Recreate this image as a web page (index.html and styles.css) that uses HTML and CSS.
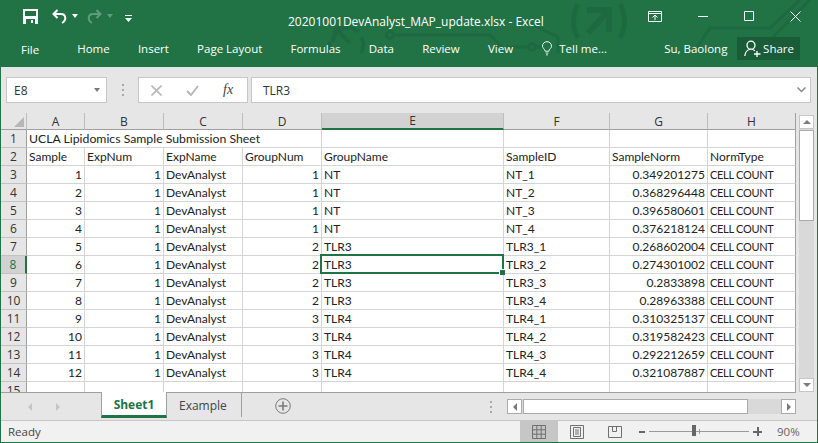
FILE: index.html
```html
<!DOCTYPE html>
<html lang="en">
<head>
    <meta charset="UTF-8">
    <title>20201001DevAnalyst_MAP_update.xlsx - Excel</title>
    <link rel="stylesheet" href="styles.css">
</head>
<body>
<div class="window">

    <!-- Green title area -->
    <header class="top">
        <svg class="circuit" width="816" height="67" viewBox="0 0 816 67" fill="none" stroke="#1e6a40" stroke-width="3">
            <path d="M332 42a14.500 14.500 0 0 1 25-10M334 28h8M334 28v8M334 28l15 15" stroke-width="4"/>
            <path d="M330 53a16 16 0 0 1-1-11M360 53a16 16 0 0 0 0-16" stroke-width="4"/>
            <circle cx="389" cy="35" r="3.500"/>
            <path d="M393 35h96l18 18"/>
            <circle cx="531" cy="47" r="3.500"/>
            <path d="M505 47h22M535 47h6M526 22l31 15v16"/>
            <path d="M577 4q-9 17 0 34M619 4q9 17 0 34" stroke-width="5"/>
            <path d="M586 10h22v22M607 11l-20 22" stroke-width="6"/>
            <path d="M692 53l17-25h60l30-28M769 40l40-40"/>
        </svg>

        <div class="titlebar">
            <div class="qat">
                <svg width="15" height="15" viewBox="0 0 15 15" class="qat-save">
                    <path d="M0 0h15v15H0z" fill="#fff"/>
                    <path d="M2 2h11v5H2zM3 10h9v5H3z" fill="#217346"/>
                    <path d="M8 11h2v3H8z" fill="#fff"/>
                </svg>
                <svg width="15" height="15" viewBox="0 0 15 15" class="qat-undo" fill="none" stroke="#fff" stroke-width="2">
                    <path d="M5.500 1L1.500 5l4 4M1.500 5H9c5 0 6 6 1 9"/>
                </svg>
                <span class="caret"></span>
                <svg width="15" height="15" viewBox="0 0 15 15" class="qat-redo" fill="none" stroke="#5f9c7c" stroke-width="2">
                    <path d="M9.500 1l4 4-4 4M13.500 5H6c-5 0-6 6-1 9"/>
                </svg>
                <span class="caret dim"></span>
                <svg width="7" height="8" viewBox="0 0 7 8" class="qat-more">
                    <path d="M0 0h7v1H0zM0 3h7L3.500 7z" fill="#fff"/>
                </svg>
            </div>
            <div class="doc-title">20201001DevAnalyst_MAP_update.xlsx - Excel</div>
            <div class="win-btns">
                <svg width="14" height="11" viewBox="0 0 14 11" fill="none" stroke="#fff">
                    <path d="M.500.500h13v10H.500zM.500 2.500h13M7 9V4.500M4.500 6.500L7 4l2.500 2.500"/>
                </svg>
                <svg width="10" height="11" viewBox="0 0 10 11" stroke="#fff"><path d="M0 5.500h10"/></svg>
                <svg width="10" height="10" viewBox="0 0 10 10" fill="none" stroke="#fff"><path d="M.500.500h9v9h-9z"/></svg>
                <svg width="11" height="11" viewBox="0 0 11 11" stroke="#fff"><path d="M.500.500l10 10M10.500.500l-10 10"/></svg>
            </div>
        </div>

        <nav class="ribbon">
            <span class="tab-file">File</span>
            <span>Home</span>
            <span>Insert</span>
            <span>Page Layout</span>
            <span>Formulas</span>
            <span>Data</span>
            <span>Review</span>
            <span>View</span>
            <span class="tell">
                <svg width="10" height="15" viewBox="0 0 11 15" fill="none" stroke="#fff">
                    <path d="M3.500 10.500C3 8 .500 7 .500 5a5 5 0 0 1 10 0c0 2-2.500 3-3 5.500zM4 12.500h3M4.500 14.500h2"/>
                </svg>
                Tell me...
            </span>
            <span class="user">Su, Baolong</span>
            <span class="share">
                <svg width="17" height="17" viewBox="0 0 17 17" fill="none" stroke="#fff" stroke-width="1.300">
                    <path d="M7 1.200a4 4 0 0 1 0 8 4 4 0 0 1 0-8zM.800 16c.4-4 3-6.800 6.200-6.800 1.500 0 2.800.5 3.800 1.500"/>
                    <path d="M13 11v6M10 14h6.500"/>
                </svg>
                Share
            </span>
        </nav>
    </header>

    <!-- Name box and formula bar -->
    <div class="formula-band">
        <div class="name-box">E8<span class="down"></span></div>
        <div class="dots"><i></i><i></i><i></i></div>
        <div class="fx-group">
            <svg width="11" height="11" viewBox="0 0 11 11" stroke="#b8b8b8" stroke-width="1.600"><path d="M.500.500l10 10M10.500.500l-10 10"/></svg>
            <svg width="13" height="11" viewBox="0 0 13 11" fill="none" stroke="#b8b8b8" stroke-width="2"><path d="M1 6l4 4 7-9"/></svg>
            <span class="fx">fx</span>
        </div>
        <div class="formula-input">
            TLR3
            <svg width="9" height="6" viewBox="0 0 9 6" fill="none" stroke="#8a8a8a" stroke-width="1.500"><path d="M.500.500l4 4 4-4"/></svg>
        </div>
    </div>

    <!-- Worksheet -->
    <div class="sheet-area">
        <div class="grid-wrap">
            <table class="grid">
                <colgroup>
                    <col class="w-row"><col class="w-a"><col class="w-b"><col class="w-b"><col class="w-b">
                    <col class="w-e"><col class="w-f"><col class="w-g"><col class="w-h">
                </colgroup>
                <thead>
                    <tr>
                        <th class="corner"><svg width="10" height="10" viewBox="0 0 10 10"><path d="M10 0v10H0z" fill="#b6b6b6"/></svg></th>
                        <th>A</th><th>B</th><th>C</th><th>D</th><th class="on">E</th><th>F</th><th>G</th><th class="last">H</th>
                    </tr>
                </thead>
                <tbody>
                    <tr><th>1</th><td colspan="4" class="heading">UCLA Lipidomics Sample Submission Sheet</td><td></td><td></td><td></td><td></td></tr>
                    <tr><th>2</th><td>Sample</td><td>ExpNum</td><td>ExpName</td><td>GroupNum</td><td>GroupName</td><td>SampleID</td><td>SampleNorm</td><td>NormType</td></tr>
                    <tr><th>3</th><td class="n">1</td><td class="n">1</td><td>DevAnalyst</td><td class="n">1</td><td>NT</td><td>NT_1</td><td class="n">0.349201275</td><td class="caps">CELL COUNT</td></tr>
                    <tr><th>4</th><td class="n">2</td><td class="n">1</td><td>DevAnalyst</td><td class="n">1</td><td>NT</td><td>NT_2</td><td class="n">0.368296448</td><td class="caps">CELL COUNT</td></tr>
                    <tr><th>5</th><td class="n">3</td><td class="n">1</td><td>DevAnalyst</td><td class="n">1</td><td>NT</td><td>NT_3</td><td class="n">0.396580601</td><td class="caps">CELL COUNT</td></tr>
                    <tr><th>6</th><td class="n">4</td><td class="n">1</td><td>DevAnalyst</td><td class="n">1</td><td>NT</td><td>NT_4</td><td class="n">0.376218124</td><td class="caps">CELL COUNT</td></tr>
                    <tr><th>7</th><td class="n">5</td><td class="n">1</td><td>DevAnalyst</td><td class="n">2</td><td>TLR3</td><td>TLR3_1</td><td class="n">0.268602004</td><td class="caps">CELL COUNT</td></tr>
                    <tr><th class="on-row">8</th><td class="n">6</td><td class="n">1</td><td>DevAnalyst</td><td class="n">2</td><td class="sel">TLR3<span class="sel-box"><span class="handle"></span></span></td><td>TLR3_2</td><td class="n">0.274301002</td><td class="caps">CELL COUNT</td></tr>
                    <tr><th>9</th><td class="n">7</td><td class="n">1</td><td>DevAnalyst</td><td class="n">2</td><td>TLR3</td><td>TLR3_3</td><td class="n">0.2833898</td><td class="caps">CELL COUNT</td></tr>
                    <tr><th>10</th><td class="n">8</td><td class="n">1</td><td>DevAnalyst</td><td class="n">2</td><td>TLR3</td><td>TLR3_4</td><td class="n">0.28963388</td><td class="caps">CELL COUNT</td></tr>
                    <tr><th>11</th><td class="n">9</td><td class="n">1</td><td>DevAnalyst</td><td class="n">3</td><td>TLR4</td><td>TLR4_1</td><td class="n">0.310325137</td><td class="caps">CELL COUNT</td></tr>
                    <tr><th>12</th><td class="n">10</td><td class="n">1</td><td>DevAnalyst</td><td class="n">3</td><td>TLR4</td><td>TLR4_2</td><td class="n">0.319582423</td><td class="caps">CELL COUNT</td></tr>
                    <tr><th>13</th><td class="n">11</td><td class="n">1</td><td>DevAnalyst</td><td class="n">3</td><td>TLR4</td><td>TLR4_3</td><td class="n">0.292212659</td><td class="caps">CELL COUNT</td></tr>
                    <tr><th>14</th><td class="n">12</td><td class="n">1</td><td>DevAnalyst</td><td class="n">3</td><td>TLR4</td><td>TLR4_4</td><td class="n">0.321087887</td><td class="caps">CELL COUNT</td></tr>
                    <tr><th>15</th><td></td><td></td><td></td><td></td><td></td><td></td><td></td><td></td></tr>
                </tbody>
            </table>
        </div>

        <div class="vscroll">
            <div class="sb-btn"><span class="arr-up"></span></div>
            <div class="vthumb"></div>
            <div class="sb-track"></div>
            <div class="sb-btn"><span class="arr-down"></span></div>
        </div>
    </div>

    <!-- Sheet tabs and horizontal scrollbar -->
    <div class="sheet-bar">
        <div class="tab-nav"><span class="nav-left"></span><span class="nav-right"></span></div>
        <div class="sheet-tab active">Sheet1</div>
        <div class="sheet-tab">Example</div>
        <svg class="add" width="16" height="16" viewBox="0 0 16 16" fill="none" stroke="#7a7a7a">
            <circle cx="8" cy="8" r="7.300"/><path d="M8 3.500v9M3.500 8h9" stroke-width="1.600"/>
        </svg>
        <div class="dots bar-dots"><i></i><i></i><i></i></div>
        <div class="hscroll">
            <div class="sb-btn"><span class="arr-left"></span></div>
            <div class="hthumb"></div>
            <div class="sb-track"></div>
            <div class="sb-btn"><span class="arr-right"></span></div>
        </div>
    </div>

    <!-- Status bar -->
    <footer class="status">
        <span class="ready">Ready</span>
        <div class="view-btn on">
            <svg width="14" height="14" viewBox="0 0 14 14" fill="none" stroke="#6f6f6f"><path d="M.500.500h13v13H.500zM.500 4.800h13M.500 9.200h13M4.800.500v13M9.200.500v13"/></svg>
        </div>
        <div class="view-btn">
            <svg width="14" height="14" viewBox="0 0 14 14" fill="none" stroke="#6f6f6f"><path d="M.500.500h13v13H.500zM3.500 2.500h7v9h-7zM5 5h4M5 7h4M5 9h4"/></svg>
        </div>
        <div class="view-btn">
            <svg width="14" height="12" viewBox="0 0 14 12" fill="none" stroke="#6f6f6f"><path d="M.500.500h13v11H.500zM4.500.500v5h4v-5"/></svg>
        </div>
        <div class="zoom">
            <span class="zoom-minus"></span>
            <div class="slider"><span class="slider-tick"></span><span class="slider-thumb"></span></div>
            <span class="zoom-plus"></span>
        </div>
        <span class="pct">90%</span>
    </footer>
</div>
</body>
</html>
```

FILE: styles.css
```css
* {
    box-sizing: border-box;
}
body {
    margin: 0;
    background-color: #217346;
    font-family: "Open Sans", "Noto Sans", sans-serif;
    overflow: hidden;
}
.window {
    width: 818px;
    height: 443px;
    display: flex;
    flex-direction: column;
    background-color: #e6e6e6;
    border: 1px solid #217346;
    border-top: none;
}

/* title + ribbon tabs */
.top {
    position: relative;
    height: 67px;
    margin: 0 -1px;
    background-color: #217346;
    color: #fff;
    font-size: 12px;
}
.circuit {
    position: absolute;
    left: 1px;
    top: 0;
}
.titlebar {
    position: relative;
    height: 34px;
    display: flex;
    align-items: center;
}
.qat {
    width: 288px;
    height: 34px;
    position: relative;
}
.qat svg, .qat .caret {
    position: absolute;
}
.qat-save { left: 23px; top: 9px; }
.qat-undo { left: 52px; top: 9px; }
.qat-redo { left: 87px; top: 9px; }
.qat-more { left: 125px; top: 15px; }
.caret {
    left: 72px;
    top: 14px;
    border-left: 3.500px solid transparent;
    border-right: 3.500px solid transparent;
    border-top: 4px solid #fff;
}
.caret.dim {
    left: 107px;
    border-top-color: #5f9c7c;
}
.doc-title {
    width: 270px;
    margin-top: 8px;
    white-space: nowrap;
}
.win-btns {
    margin-left: auto;
    margin-top: -2px;
    padding-right: 17px;
    display: flex;
    gap: 36px;
    align-items: center;
}
.ribbon {
    position: relative;
    height: 29px;
    display: flex;
    align-items: center;
    gap: 28.200px;
    padding-left: 21px;
    white-space: nowrap;
    font-size: 11.500px;
}
.tab-file {
    margin-right: 9.800px;
    margin-top: 2px;
}
.tell {
    display: flex;
    align-items: center;
    gap: 7px;
    margin-left: 1px;
}
.user {
    margin-left: 29px;
}
.share {
    margin-left: -18.500px;
    width: 63px;
    height: 23px;
    background-color: #1a5c38;
    display: flex;
    align-items: center;
    gap: 2px;
    padding-left: 7px;
}

/* formula band */
.formula-band {
    height: 46px;
    display: flex;
    align-items: center;
    padding: 0 6px 0 5px;
    color: #333;
    font-size: 12px;
}
.name-box, .fx-group, .formula-input {
    height: 26px;
    background-color: #fff;
    border: 1px solid #c6c6c6;
    display: flex;
    align-items: center;
}
.name-box {
    width: 101px;
    padding-left: 7px;
    justify-content: space-between;
    padding-right: 6px;
}
.down {
    border-left: 3.500px solid transparent;
    border-right: 3.500px solid transparent;
    border-top: 4px solid #7a7a7a;
}
.dots {
    width: 31px;
    display: flex;
    flex-direction: column;
    align-items: center;
    gap: 3px;
}
.dots i {
    width: 2px;
    height: 2px;
    background-color: #a8a8a8;
}
.fx-group {
    width: 110px;
    gap: 24px;
    padding-left: 12px;
    margin-right: 3px;
}
.fx {
    font-family: "Liberation Serif", serif;
    font-style: italic;
    font-size: 14px;
    color: #444;
}
.formula-input {
    flex: 1;
    padding: 0 4px 0 11px;
    justify-content: space-between;
}

/* worksheet */
.sheet-area {
    height: 280px;
    display: flex;
}
.grid-wrap {
    width: 795px;
    height: 280px;
    overflow: hidden;
    border-bottom: 1px solid #9f9f9f;
    background-color: #fff;
}
.grid {
    table-layout: fixed;
    width: 795px;
    border-collapse: separate;
    border-spacing: 0;
    color: #222;
    font-family: Lato, "Liberation Sans", sans-serif;
    font-size: 12px;
}
.w-row { width: 26px; }
.w-a { width: 58px; }
.w-b { width: 79px; }
.w-e { width: 182px; }
.w-f { width: 106px; }
.w-g { width: 98px; }
.w-h { width: 88px; }
.grid th, .grid td {
    height: 18px;
    padding: 0 2px;
    line-height: 15px;
    font-weight: normal;
    white-space: nowrap;
    overflow: hidden;
}
.grid td {
    border-right: 1px solid #d4d4d4;
    border-bottom: 1px solid #d4d4d4;
}
.grid td:last-child {
    border-right-color: #9f9f9f;
}
.grid td.n {
    text-align: right;
}
.grid td.heading {
    font-size: 12.250px;
}
.grid td.caps {
    font-size: 11px;
    letter-spacing: -0.300px;
}
.grid tbody th {
    background-color: #e6e6e6;
    border-right: 1px solid #9f9f9f;
    border-bottom: 1px solid #c2c2c2;
    color: #333;
    text-align: center;
    font-family: "Open Sans", sans-serif;
}
.grid thead th {
    height: 17px;
    background-color: #e6e6e6;
    border-bottom: 1px solid #9f9f9f;
    border-right: 1px solid #bdbdbd;
    color: #333;
    text-align: center;
    font-family: "Open Sans", sans-serif;
}
.grid thead th.corner {
    padding: 2px 2px 0 0;
    text-align: right;
    line-height: 0;
}
.grid thead th.on {
    background-color: #d2d2d2;
    border-bottom: 2px solid #217346;
}
.grid thead th.last {
    border-right-color: #9f9f9f;
}
.grid tbody th.on-row {
    background-color: #d2d2d2;
    border-right: 2px solid #217346;
    color: #217346;
}
.grid td.sel {
    position: relative;
    overflow: visible;
}
.sel-box {
    position: absolute;
    left: -2px;
    top: -2px;
    right: -1px;
    bottom: -1px;
    border: 2px solid #217346;
}
.handle {
    position: absolute;
    right: -3px;
    bottom: -3px;
    width: 6px;
    height: 6px;
    background-color: #217346;
    border: 1px solid #fff;
    border-right: none;
    border-bottom: none;
}

/* scrollbars */
.vscroll {
    width: 15px;
    margin: 2px 0 0 3px;
    height: 277px;
    display: flex;
    flex-direction: column;
    background-color: #d9d9d9;
}
.sb-btn {
    flex: none;
    width: 15px;
    height: 15px;
    background-color: #fff;
    border: 1px solid #ababab;
    display: flex;
    align-items: center;
    justify-content: center;
}
.vscroll .sb-btn {
    height: 14px;
    border-color: #c6c6c6;
}
.vthumb {
    height: 91px;
    flex: none;
    width: 15px;
    background-color: #fff;
    border: 1px solid #ababab;
    margin-top: 1px;
}
.sb-track {
    flex: 1;
}
.arr-up, .arr-down {
    border-left: 4px solid transparent;
    border-right: 4px solid transparent;
}
.arr-up { border-bottom: 4px solid #7a7a7a; }
.arr-down { border-top: 4px solid #7a7a7a; }
.arr-left, .arr-right {
    border-top: 4px solid transparent;
    border-bottom: 4px solid transparent;
}
.arr-left { border-right: 4px solid #7a7a7a; }
.arr-right { border-left: 4px solid #7a7a7a; }

/* sheet tabs */
.sheet-bar {
    height: 28px;
    display: flex;
    align-items: flex-start;
    border-bottom: 1px solid #c6c6c6;
    font-size: 12px;
    color: #444;
}
.tab-nav {
    width: 100px;
    height: 27px;
    display: flex;
    align-items: center;
    gap: 24px;
    padding-left: 27px;
}
.nav-left {
    border-top: 4px solid transparent;
    border-bottom: 4px solid transparent;
    border-right: 4px solid #c4c4c4;
}
.nav-right {
    border-top: 4px solid transparent;
    border-bottom: 4px solid transparent;
    border-left: 4px solid #c4c4c4;
}
.sheet-tab {
    height: 24px;
    line-height: 25px;
    padding: 0 12px;
    border-right: 1px solid #9f9f9f;
    width: 75px;
    white-space: nowrap;
}
.sheet-tab.active {
    position: relative;
    width: 66px;
    height: 26px;
    margin-top: -1px;
    padding: 1px 0 0;
    line-height: 24px;
    text-align: center;
    font-weight: bold;
    color: #217346;
    background-color: #fff;
    border-left: 1px solid #9f9f9f;
    border-right: 1px solid #9f9f9f;
    border-bottom: 3px solid #217346;
}
.add {
    margin: 5px 0 0 33px;
    flex: none;
}
.bar-dots {
    margin: 8px 0 0 199px;
    width: 2px;
}
.hscroll {
    margin: 6px 0 0 15px;
    width: 289px;
    height: 15px;
    display: flex;
    background-color: #d9d9d9;
}
.hthumb {
    width: 225px;
    flex: none;
    margin-left: 1px;
    background-color: #fff;
    border: 1px solid #ababab;
}

/* status bar */
.status {
    height: 21px;
    display: flex;
    align-items: center;
    background-color: #f1f1f1;
    font-size: 11.500px;
    color: #444;
    padding-left: 7px;
}
.ready {
    width: 512px;
}
.view-btn {
    width: 38px;
    height: 21px;
    display: flex;
    align-items: center;
    justify-content: center;
}
.view-btn.on {
    background-color: #c6c6c6;
}
.zoom {
    width: 127px;
    position: relative;
    height: 21px;
}
.zoom-minus {
    position: absolute;
    left: 5px;
    top: 10px;
    width: 6px;
    height: 2px;
    background-color: #666;
}
.zoom-plus {
    position: absolute;
    left: 119px;
    top: 6px;
    width: 9px;
    height: 9px;
    background:
        linear-gradient(#666, #666) center / 9px 2px no-repeat,
        linear-gradient(#666, #666) center / 2px 9px no-repeat;
}
.slider {
    position: absolute;
    left: 15px;
    top: 10px;
    width: 100px;
    height: 1px;
    background-color: #9a9a9a;
}
.slider-tick {
    position: absolute;
    left: 50px;
    top: -2px;
    width: 1px;
    height: 5px;
    background-color: #9a9a9a;
}
.slider-thumb {
    position: absolute;
    left: 43px;
    top: -6px;
    width: 4px;
    height: 11px;
    background-color: #666;
}
.pct {
    margin-left: 16px;
    color: #666;
}
```
